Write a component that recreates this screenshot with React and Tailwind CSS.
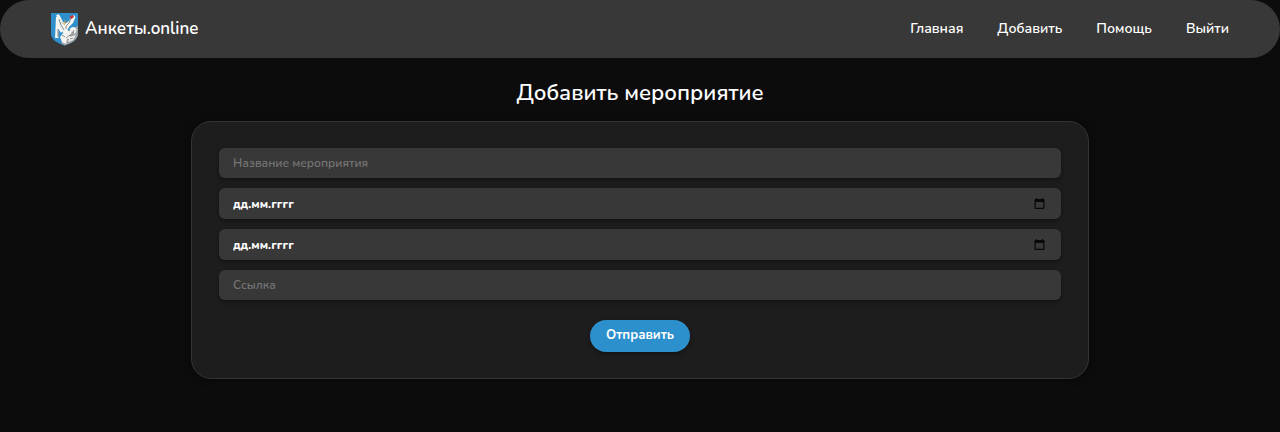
import React from "react";

const links = ["Главная", "Добавить", "Помощь", "Выйти"];

function Crest() {
  return (
    <svg viewBox="0 0 27 33" className="h-[33px] w-[27px] shrink-0" aria-hidden="true">
      <path d="M0 0H27V20C27 27 21 30 13.500 32.500C6 30 0 27 0 20Z" fill="#2f8fcb" />
      <path d="M27 13V20C27 27 21 30 13.500 32.500L10 30L13 22L20 16Z" fill="#9fa3a5" />
      <path d="M5 4L7 3L9 6L8.500 12L12 18L10 20L7.500 16V25L4 25Z" fill="#f5f5f2" />
      <path d="M5 2.500L7.500 1L9 3L12 9L15 10L18 8L20 4L23 2L24.500 4L22 10L18 14L16.500 17L20 20L17 24L13 22L11 17L8 12L9 7Z" fill="#f5f5f2" />
      <path d="M18 17C20 13 25 13 25.500 17L24 21L21 18L20 21L18 20Z" fill="#f5f5f2" />
      <path d="M9 24L12 20L18 22L20 25L16 26L15 31L11 29ZM19 24L25 22L22 27L17 29Z" fill="#f5f5f2" />
      <path d="M8 6L10 12L13 17M20 5L18 10L15 13V16M11 22L14 24M15 25L19 22M19 16L18 18M23 17L22 20M19 26L22 25M7 16V24" fill="none" stroke="#5b6468" strokeWidth="0.7" />
      <path d="M18.500 4L21 2L23 3L22 5L20 6Z" fill="#c8323b" />
      <path d="M11 9.500L13 11.500L16 9M14 7V10" fill="none" stroke="#b99a52" strokeWidth="1" />
    </svg>
  );
}

function CalendarIcon() {
  return (
    <svg viewBox="0 0 11 12" className="h-3 w-[11px]" aria-hidden="true">
      <path fillRule="evenodd" d="M2 0H3V1H8V0H9V1H9.500Q10.500 1 10.500 2V10Q10.500 11 9.500 11H1.500Q0.500 11 0.500 10V2Q0.500 1 1.500 1H2ZM1.700 4V9.800H9.300V4Z" fill="#080808" />
    </svg>
  );
}

const fieldClass = "flex items-center rounded-md bg-[#383838] px-3.5 shadow-[0_2px_4px_rgba(0,0,0,0.35)]";

function TextField({ name, label }) {
  return (
    <div className={`${fieldClass} h-[30px]`}>
      <input
        name={name}
        type="text"
        aria-label={label}
        placeholder={label}
        className="w-full bg-transparent text-[12px] leading-5 font-semibold text-white outline-none placeholder:text-[#757575]"
      />
    </div>
  );
}

function DateField({ name, label }) {
  return (
    <div className={`${fieldClass} h-[31px]`}>
      <input
        name={name}
        type="text"
        inputMode="numeric"
        aria-label={label}
        placeholder="дд.мм.гггг"
        className="min-w-0 flex-1 bg-transparent text-[12px] leading-5 font-extrabold text-white outline-none placeholder:text-white"
      />
      <button type="button" aria-label="Открыть календарь" className="px-0.5">
        <CalendarIcon />
      </button>
    </div>
  );
}

export default function App() {
  return (
    <div className="min-h-screen bg-[#0c0c0c] font-['Nunito','Open_Sans','Noto_Sans',sans-serif] text-white">
      <header className="flex h-[58px] items-center justify-between rounded-full bg-[#383838] px-[51px]">
        <a href="#" className="flex items-center gap-[7px] text-[17px] font-semibold">
          <Crest />
          Анкеты.online
        </a>
        <nav className="flex gap-[34px] text-[14px] leading-[18px] font-semibold">
          {links.map((name) => (
            <a key={name} href="#">{name}</a>
          ))}
        </nav>
      </header>
      <main className="mx-auto w-full max-w-[898px] pt-5">
        <h1 className="text-center text-[22px] leading-[30px] font-semibold">Добавить мероприятие</h1>
        <form
          onSubmit={(e) => e.preventDefault()}
          className="mt-[13px] flex flex-col gap-2.5 rounded-[20px] border border-[#343434] bg-[#1d1d1d] px-[27px] py-[26px] shadow-[0_0_10px_rgba(0,0,0,0.4)]"
        >
          <TextField name="title" label="Название мероприятия" />
          <DateField name="start" label="Дата начала" />
          <DateField name="end" label="Дата окончания" />
          <TextField name="link" label="Ссылка" />
          <button
            type="submit"
            className="mt-2.5 h-8 self-center rounded-full bg-[#2b90cc] px-4 text-[13px] font-bold shadow-[0_2px_4px_rgba(0,0,0,0.35)]"
          >
            Отправить
          </button>
        </form>
      </main>
    </div>
  );
}
